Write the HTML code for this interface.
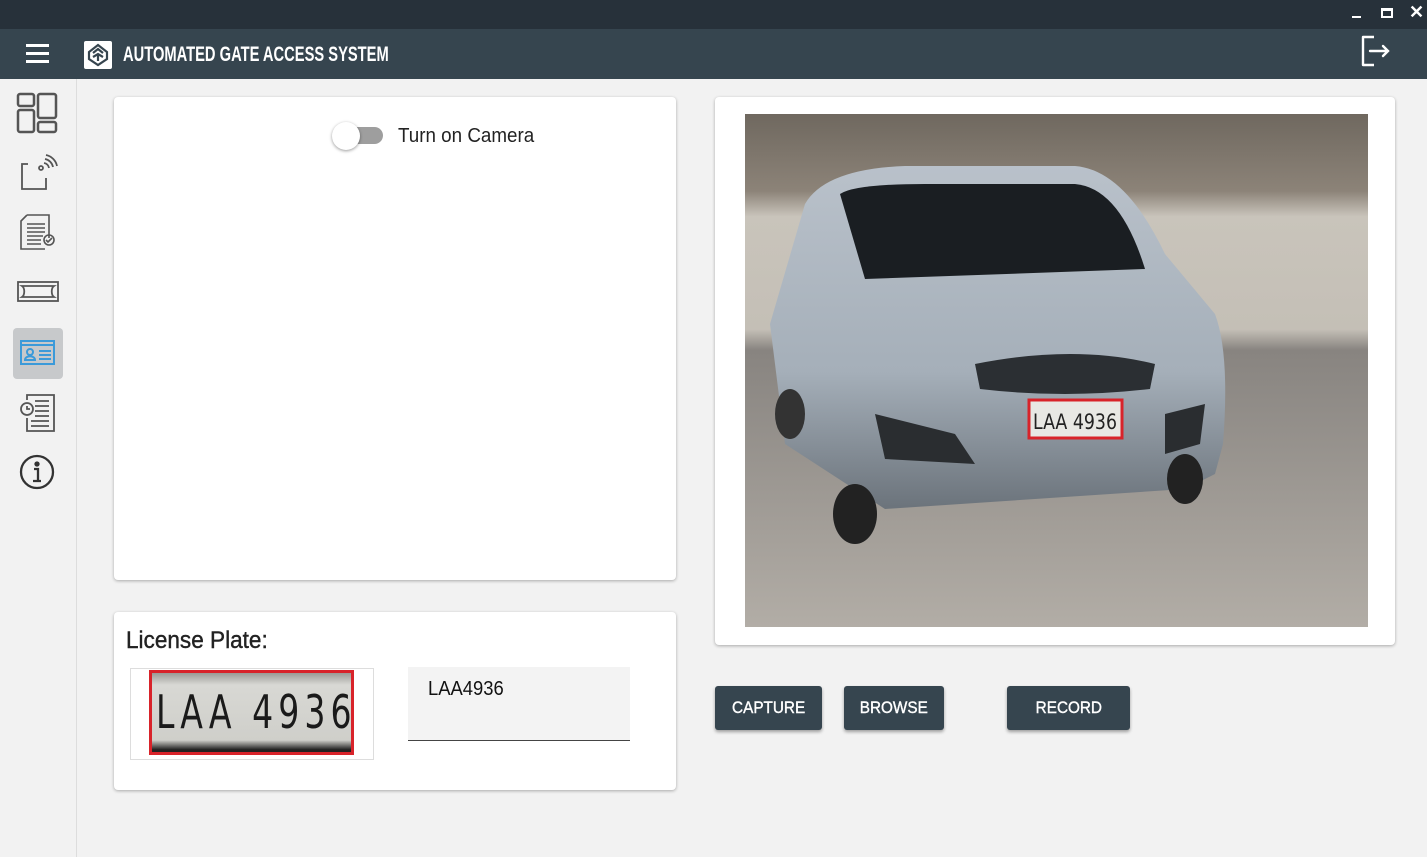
<!DOCTYPE html>
<html><head><meta charset="utf-8"><style>
*{box-sizing:border-box;margin:0;padding:0}
body{width:1427px;height:857px;overflow:hidden;background:#f2f2f2;font-family:"Liberation Sans",sans-serif;position:relative}
.tb{position:absolute;left:0;top:0;width:1427px;height:29px;background:#27313a}
.hd{position:absolute;left:0;top:29px;width:1427px;height:50px;background:#36454f}
.side{position:absolute;left:0;top:79px;width:77px;height:778px;background:#f2f2f2;border-right:1px solid #ddd}
.card{position:absolute;background:#fff;border-radius:4px;box-shadow:0 1px 3px rgba(0,0,0,.3)}
.btn{position:absolute;top:686px;height:44px;background:#36454f;color:#fff;font-size:17px;border-radius:3px;box-shadow:0 2px 3px rgba(0,0,0,.35);display:flex;align-items:center;justify-content:center}
.btn span{display:inline-block;transform:scaleX(.9);-webkit-text-stroke:.4px #fff}
</style></head><body>
<div class="tb">
<div style="position:absolute;left:1352px;top:16px;width:9px;height:2px;background:#fff"></div>
<div style="position:absolute;left:1381px;top:8px;width:12px;height:10px;border:2px solid #fff;border-top-width:3px"></div>
<div style="position:absolute;left:1409px;top:2px;color:#fff;font-size:18px;font-weight:bold">✕</div>
</div>
<div class="hd">
<div style="position:absolute;left:26px;top:15px;width:23px;height:3px;background:#fff;box-shadow:0 8px 0 #fff,0 16px 0 #fff"></div>
<div style="position:absolute;left:84px;top:12px;width:28px;height:28px;background:#fff;border-radius:2px">
<svg width="28" height="28" viewBox="0 0 28 28"><path d="M14 4 L23 11 L23 18 L14 24 L5 18 L5 11 Z M9 12 L14 8 L19 12 M9 16 L14 13 L19 16 M14 13 V20" fill="none" stroke="#36454f" stroke-width="2.2"/></svg></div>
<div style="position:absolute;left:123px;top:14px;color:#fff;font-size:21px;font-weight:bold;white-space:nowrap;transform:scaleX(.7);transform-origin:left">AUTOMATED GATE ACCESS SYSTEM</div>
<svg style="position:absolute;left:1358px;top:4px" width="36" height="36" viewBox="0 0 36 36"><path d="M16 4 H5 V32 H16" fill="none" stroke="#fff" stroke-width="2.4" stroke-linejoin="round"/><path d="M12 18 H30 M25 13 L30 18 L25 23" fill="none" stroke="#fff" stroke-width="2.4" stroke-linecap="round"/></svg>
</div>
<div class="side">
<svg style="position:absolute;left:16px;top:13px" width="42" height="42" viewBox="0 0 42 42" fill="none" stroke="#555" stroke-width="2.5"><rect x="2" y="2" width="16" height="12" rx="2"/><rect x="2" y="18" width="16" height="22" rx="2"/><rect x="22" y="2" width="18" height="24" rx="2"/><rect x="22" y="30" width="18" height="10" rx="2"/></svg>
<svg style="position:absolute;left:18px;top:75px" width="40" height="40" viewBox="0 0 40 40" fill="none" stroke="#555" stroke-width="1.8"><path d="M10 10 H4 V35 H28 V24"/><circle cx="23" cy="14" r="2"/><path d="M26 9 A6 6 0 0 1 31 14 M27 5 A10 10 0 0 1 35 13 M28 1 A14 14 0 0 1 39 12"/></svg>
<svg style="position:absolute;left:19px;top:133px" width="38" height="40" viewBox="0 0 38 40" fill="none" stroke="#555" stroke-width="1.6"><path d="M8 3 H30 V26 M8 3 L2 9 V37 H26"/><path d="M8 12 H26 M8 16 H26 M8 20 H26 M8 24 H24 M8 28 H22 M8 32 H22"/><circle cx="30" cy="28" r="5"/><path d="M27 28 L29 30 L33 26"/></svg>
<svg style="position:absolute;left:17px;top:201px" width="42" height="24" viewBox="0 0 42 24" fill="none" stroke="#555" stroke-width="1.8"><rect x="1" y="2" width="40" height="19"/><path d="M5 6 C8 8 8 15 5 17 H37 C34 15 34 8 37 6 Z"/></svg>
<div style="position:absolute;left:13px;top:249px;width:50px;height:51px;background:#c7c9cb;border-radius:4px"></div>
<svg style="position:absolute;left:20px;top:261px" width="35" height="26" viewBox="0 0 35 26" fill="none" stroke="#3b9ad9" stroke-width="2"><rect x="1" y="1" width="33" height="23"/><path d="M1 5 H34"/><circle cx="10" cy="12" r="3"/><path d="M5 20 C5 15 15 15 15 20 Z M19 11 H31 M19 15 H31 M19 19 H31"/></svg>
<svg style="position:absolute;left:18px;top:314px" width="40" height="40" viewBox="0 0 40 40" fill="none" stroke="#555" stroke-width="1.8"><path d="M9 7 V2 H36 V38 H9 V25"/><circle cx="9" cy="16" r="6"/><path d="M9 13 V16 H12 M17 8 H31 M17 13 H31 M17 18 H31 M17 23 H31 M13 28 H31 M13 33 H31"/></svg>
<svg style="position:absolute;left:19px;top:375px" width="36" height="36" viewBox="0 0 36 36" fill="none" stroke="#333" stroke-width="2.3"><circle cx="18" cy="18" r="16"/><circle cx="18" cy="10" r="1.5" fill="#333"/><path d="M15 15 H19 V27 M14 27 H22"/></svg>
</div>
<div class="card" style="left:114px;top:97px;width:562px;height:483px">
<div style="position:absolute;left:220px;top:30px;width:49px;height:17px;background:#9e9e9e;border-radius:9px"></div>
<div style="position:absolute;left:218px;top:25px;width:28px;height:28px;background:#fff;border-radius:50%;box-shadow:0 1px 3px rgba(0,0,0,.4)"></div>
<div style="position:absolute;left:284px;top:28px;font-size:20px;color:#222;transform:scaleX(.94);transform-origin:left">Turn on Camera</div>
</div>
<div class="card" style="left:114px;top:612px;width:562px;height:178px">
<div style="position:absolute;left:12px;top:15px;font-size:24px;color:#222;transform:scaleX(.94);transform-origin:left;-webkit-text-stroke:.4px #222">License Plate:</div>
<div style="position:absolute;left:16px;top:56px;width:244px;height:92px;border:1px solid #ddd"></div>
<div style="position:absolute;left:35px;top:58px;width:205px;height:85px;border:3px solid #d8232a;background:linear-gradient(#9a9a95,#d8d8d4 15%,#cfcfca 85%,#222 97%);overflow:hidden">
<div style="position:absolute;left:4px;top:12px;font-family:'DejaVu Sans','Liberation Sans',sans-serif;font-size:46px;letter-spacing:7px;color:#1a1a1a;white-space:nowrap;transform:scaleX(.72);transform-origin:left">LAA 4936</div></div>
<div style="position:absolute;left:294px;top:55px;width:222px;height:74px;background:#f3f3f3;border-bottom:1px solid #444"><div style="position:absolute;left:20px;top:11px;font-size:20px;color:#111;transform:scaleX(.92);transform-origin:left">LAA4936</div></div>
</div>
<div class="card" style="left:715px;top:97px;width:680px;height:548px">
<svg style="position:absolute;left:30px;top:17px" width="623" height="513" viewBox="0 0 623 513">
<defs><linearGradient id="w" x1="0" y1="0" x2="0" y2="1"><stop offset="0" stop-color="#6f685f"/><stop offset=".15" stop-color="#8c8378"/><stop offset=".2" stop-color="#c9c4bb"/><stop offset=".42" stop-color="#c4bfb6"/><stop offset=".46" stop-color="#888480"/><stop offset="1" stop-color="#b2ada6"/></linearGradient>
<linearGradient id="c" x1="0" y1="0" x2="0" y2="1"><stop offset="0" stop-color="#b9c1ca"/><stop offset=".6" stop-color="#a5afb9"/><stop offset="1" stop-color="#6b737b"/></linearGradient></defs>
<rect width="623" height="513" fill="url(#w)"/>
<path d="M25 210 L60 90 Q80 55 160 52 L330 52 Q380 56 420 140 L470 200 Q485 240 478 330 L470 360 L440 375 L140 395 L40 330 Z" fill="url(#c)"/>
<path d="M95 80 Q110 70 180 70 L330 70 Q375 74 400 155 L120 165 Z" fill="#1a1e22"/>
<path d="M230 250 Q330 230 410 250 L405 275 Q320 285 235 275 Z" fill="#2b2f33"/>
<path d="M130 300 L210 320 L230 350 L140 345 Z M420 300 L460 290 L455 330 L420 340 Z" fill="#2a2d30"/>
<rect x="284" y="286" width="93" height="38" fill="#e8e8e4" stroke="#d8232a" stroke-width="3"/>
<text x="288" y="315" font-family="DejaVu Sans,sans-serif" font-size="21" fill="#222" textLength="84" lengthAdjust="spacingAndGlyphs">LAA 4936</text>
<ellipse cx="110" cy="400" rx="22" ry="30" fill="#222"/><ellipse cx="440" cy="365" rx="18" ry="25" fill="#222"/><ellipse cx="45" cy="300" rx="15" ry="25" fill="#333"/>
</svg>
</div>
<div class="btn" style="left:715px;width:107px"><span>CAPTURE</span></div>
<div class="btn" style="left:844px;width:100px"><span>BROWSE</span></div>
<div class="btn" style="left:1007px;width:123px"><span>RECORD</span></div>
</body></html>
